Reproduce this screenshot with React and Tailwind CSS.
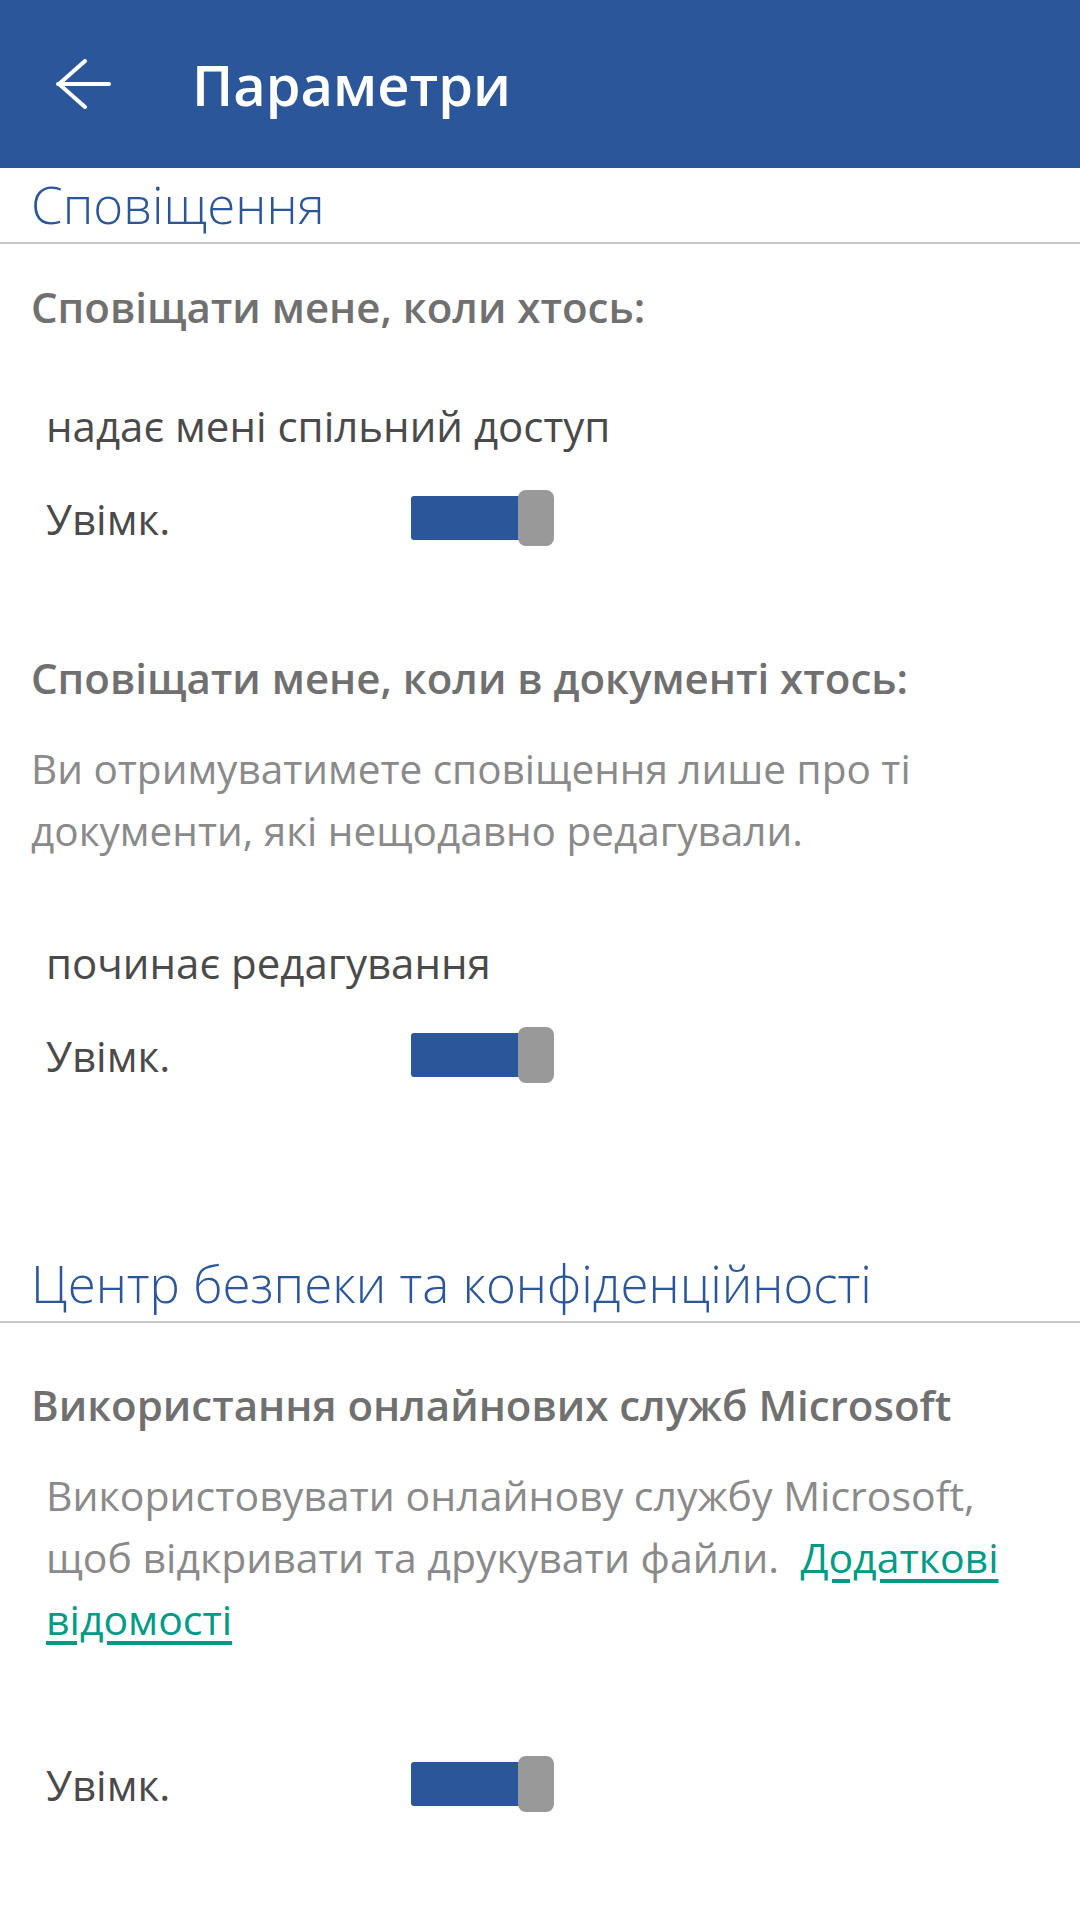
const font = { fontFamily: '"Open Sans", "Noto Sans", sans-serif' };

function Toggle() {
  return (
    <div className="flex items-center">
      <div className="w-[115px] h-[44px] rounded-[3px] bg-[#2b579a]" />
      <div className="w-[36px] h-[56px] -ml-[8px] rounded-[8px] bg-[#999999]" />
    </div>
  );
}

function SwitchRow({ className = '' }) {
  return (
    <div className={`flex items-center h-[60px] pl-[46px] ${className}`}>
      <span className="w-[365px] text-[42px] text-[#4a4a4a]">Увімк.</span>
      <Toggle />
    </div>
  );
}

function SectionTitle({ children, className = '' }) {
  return (
    <div className={`pl-[31px] pb-[8px] border-b-2 border-[#c8c8c8] ${className}`}>
      <h2 className="text-[51px] leading-[60px] font-light text-[#2b579a]">{children}</h2>
    </div>
  );
}

function GroupTitle({ children, className = '' }) {
  return (
    <h3 className={`pl-[31px] text-[42px] leading-[60px] font-semibold text-[#707070] ${className}`}>
      {children}
    </h3>
  );
}

export default function App() {
  return (
    <div className="w-[1080px] h-[1920px] bg-white overflow-hidden" style={font}>
      <header className="h-[168px] bg-[#2b579a] flex items-center">
        <svg className="ml-[56px]" width="56" height="50" viewBox="0 0 56 50" fill="none">
          <path d="M2 25 H53 M29 2 L3 25 L29 48" stroke="white" strokeWidth="4" strokeLinecap="round" strokeLinejoin="round" />
        </svg>
        <h1 className="ml-[80px] text-[56px] font-semibold text-white leading-none">Параметри</h1>
      </header>

      <SectionTitle className="pt-[6px]">Сповіщення</SectionTitle>

      <GroupTitle className="mt-[33px]">Сповіщати мене, коли хтось:</GroupTitle>
      <p className="mt-[59px] pl-[46px] text-[42px] leading-[60px] text-[#4a4a4a]">надає мені спільний доступ</p>
      <SwitchRow className="mt-[32px]" />

      <GroupTitle className="mt-[100px]">Сповіщати мене, коли в документі хтось:</GroupTitle>
      <p className="mt-[30px] pl-[31px] pr-[60px] text-[40.5px] leading-[62px] text-[#8a8a8a]">
        Ви отримуватимете сповіщення лише про ті документи, які нещодавно редагували.
      </p>
      <p className="mt-[71px] pl-[46px] text-[42px] leading-[60px] text-[#4a4a4a]">починає редагування</p>
      <SwitchRow className="mt-[32px]" />

      <SectionTitle className="mt-[168px]">Центр безпеки та конфіденційності</SectionTitle>

      <GroupTitle className="mt-[52px]">Використання онлайнових служб Microsoft</GroupTitle>
      <p className="mt-[29px] pl-[46px] pr-[60px] text-[41px] leading-[62px] text-[#8a8a8a]">
        Використовувати онлайнову службу Microsoft, щоб відкривати та друкувати файли.{'\u00a0 '}
        <a href="#" className="text-[#009a86] underline underline-offset-[6px]">Додаткові відомості</a>
      </p>
      <SwitchRow className="mt-[104px]" />
    </div>
  );
}
